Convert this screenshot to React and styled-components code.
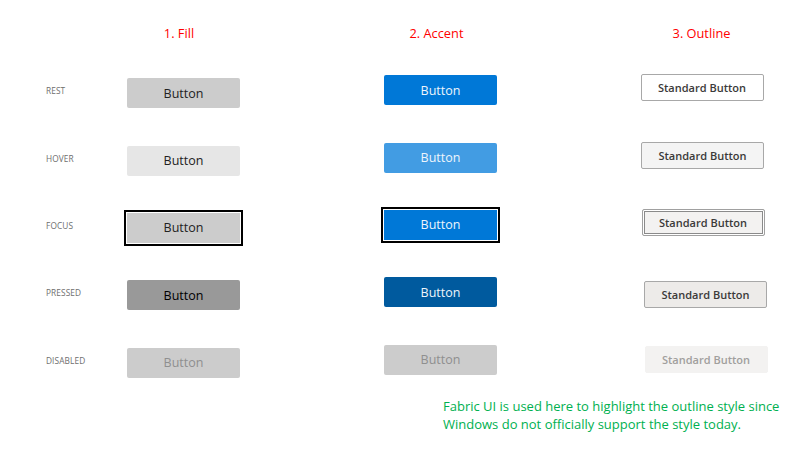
import styled, { createGlobalStyle, css } from "styled-components";

const GlobalStyle = createGlobalStyle`
    html, body {
        margin: 0;
        padding: 0;
        background: #ffffff;
    }
`;

const ROW = 67.4;

const Page = styled.div`
    width: 800px;
    height: 450px;
    overflow: hidden;
    background: #ffffff;
    display: flex;
    flex-direction: column;
`;

const Grid = styled.div`
    display: grid;
    grid-template-columns: 120px 127px 387px 138px;
    grid-template-rows: 41px repeat(5, ${ROW}px);
    padding-top: 16px;
`;

const Cell = styled.div`
    display: flex;
    align-items: center;
    justify-content: center;
    ${p => p.$dy > 0 && `padding-top: ${2 * p.$dy}px;`}
    ${p => p.$dy < 0 && `padding-bottom: ${-2 * p.$dy}px;`}
    ${p => p.$dx > 0 && `padding-left: ${2 * p.$dx}px;`}
    ${p => p.$dx < 0 && `padding-right: ${-2 * p.$dx}px;`}
`;

const Heading = styled(Cell)`
    padding-bottom: 8px;
    font-family: "Open Sans", "Liberation Sans", sans-serif;
    font-size: 12.8px;
    color: #ff0000;
    ${p => p.$dx < 0 && `padding-right: ${-2 * p.$dx}px;`}
`;

const StateLabel = styled.div`
    display: flex;
    align-items: center;
    padding-left: 46px;
    font-family: "Open Sans", "Liberation Sans", sans-serif;
    font-size: 8.3px;
    color: #6e6e6e;
    letter-spacing: 0.1px;
`;

const fillStates = {
    rest: css`background: #cccccc; color: #222222;`,
    hover: css`background: #e6e6e6; color: #222222;`,
    focus: css`
        background: #cccccc;
        color: #222222;
        box-shadow: 0 0 0 1px #ffffff, 0 0 0 3px #000000;
        border-radius: 0;
    `,
    pressed: css`background: #999999; color: #000000;`,
    disabled: css`background: #cccccc; color: #8f8f8f;`,
};

const accentStates = {
    rest: css`background: #0078d7; color: #eef5fc;`,
    hover: css`background: #429ce3; color: #eef5fc;`,
    focus: css`
        background: #0078d7;
        color: #eef5fc;
        box-shadow: 0 0 0 1px #ffffff, 0 0 0 3px #000000;
        border-radius: 0;
    `,
    pressed: css`background: #005a9e; color: #eef5fc;`,
    disabled: css`background: #cccccc; color: #8f8f8f;`,
};

const outlineStates = {
    rest: css`background: #ffffff; border-color: #a8a8a8;`,
    hover: css`background: #f4f4f4; border-color: #a8a8a8;`,
    focus: css`
        background: #f3f2f1;
        border-color: #a0a0a0;
        box-shadow: inset 0 0 0 1px #ffffff, inset 0 0 0 2px #8a8a8a;
    `,
    pressed: css`background: #edebe9; border-color: #a8a8a8;`,
    disabled: css`background: #f3f2f1; border-color: #f3f2f1; color: #a19f9d;`,
};

const Button = styled.div`
    box-sizing: border-box;
    display: flex;
    align-items: center;
    justify-content: center;
    width: 113px;
    height: 30px;
    border-radius: 2px;
    font-family: "Open Sans", "Liberation Sans", sans-serif;
    font-size: 12.5px;
    ${p => p.$variant === "fill" && fillStates[p.$state]}
    ${p => p.$variant === "accent" && accentStates[p.$state]}
`;

const OutlineButton = styled.div`
    box-sizing: border-box;
    display: flex;
    align-items: center;
    justify-content: center;
    width: 123px;
    height: 27px;
    border: 1px solid #a8a8a8;
    border-radius: 2px;
    font-family: "Open Sans", "Liberation Sans", sans-serif;
    font-size: 11px;
    font-weight: 600;
    color: #3b3a39;
    ${p => outlineStates[p.$state]}
`;

const Note = styled.div`
    padding: 3px 0 0 443px;
    font-family: "Open Sans", "Liberation Sans", sans-serif;
    font-size: 13px;
    line-height: 18px;
    letter-spacing: 0;
    color: #00b050;
`;

const states = [
    {key: "rest", label: "REST"},
    {key: "hover", label: "HOVER"},
    {key: "focus", label: "FOCUS"},
    {key: "pressed", label: "PRESSED"},
    {key: "disabled", label: "DISABLED"},
];

const outlineOffsets = {
    rest: {dx: -1, dy: -3},
    hover: {dx: -0.5, dy: -3},
    focus: {dx: 0, dy: -2.5},
    pressed: {dx: 2.5, dy: 2},
    disabled: {dx: 3, dy: -1},
};

export default function App() {
    return (
        <>
            <GlobalStyle/>
            <Page>
                <Grid>
                    <div/>
                    <Heading $dx={-4.5}>1. Fill</Heading>
                    <Heading $dx={-4}>2. Accent</Heading>
                    <Heading $dx={-1.5}>3. Outline</Heading>
                    {states.map(s => (
                        <>
                            <StateLabel key={s.key + "-label"}>{s.label}</StateLabel>
                            <Cell key={s.key + "-fill"} $dy={2.5}>
                                <Button $variant="fill" $state={s.key}>Button</Button>
                            </Cell>
                            <Cell key={s.key + "-accent"} $dy={-0.5}>
                                <Button $variant="accent" $state={s.key}>Button</Button>
                            </Cell>
                            <Cell key={s.key + "-outline"} $dx={outlineOffsets[s.key].dx}
                                  $dy={outlineOffsets[s.key].dy}>
                                <OutlineButton $state={s.key}>Standard Button</OutlineButton>
                            </Cell>
                        </>
                    ))}
                </Grid>
                <Note>
                    Fabric UI is used here to highlight the outline style since<br/>
                    Windows do not officially support the style today.
                </Note>
            </Page>
        </>
    );
}
